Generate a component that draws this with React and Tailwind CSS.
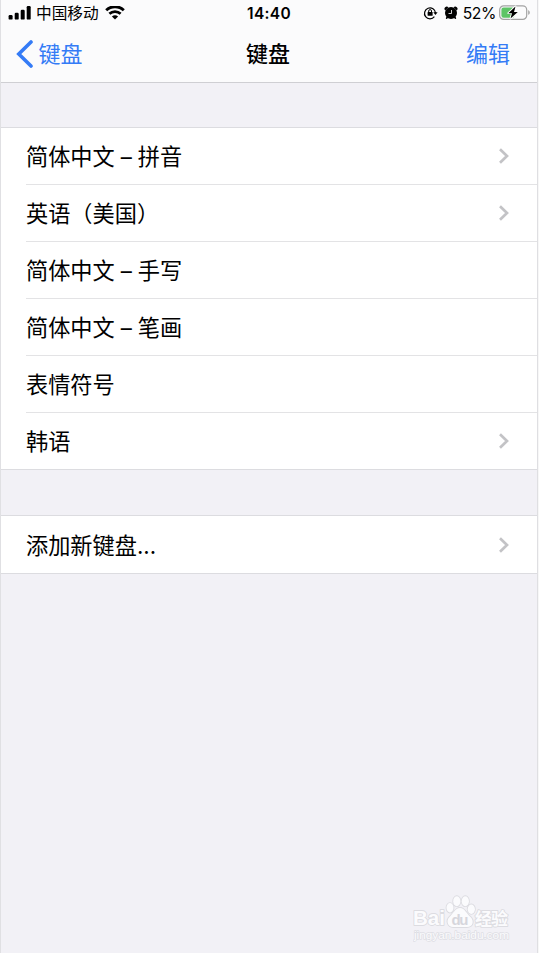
import React from 'react';

const keyboards = [
  { name: '简体中文 – 拼音', hasDetail: true },
  { name: '英语（美国）', hasDetail: true },
  { name: '简体中文 – 手写', hasDetail: false },
  { name: '简体中文 – 笔画', hasDetail: false },
  { name: '表情符号', hasDetail: false },
  { name: '韩语', hasDetail: true },
];

const SignalIcon = () => (
  <svg className="ml-[7px] h-[14px] w-[23px]" viewBox="0 0 23 14" fill="#000">
    <rect x="0.6" y="9" width="4" height="4.6" rx="1.2" />
    <rect x="6.7" y="6.8" width="4" height="6.8" rx="1.2" />
    <rect x="12.7" y="3.8" width="4" height="9.8" rx="1.2" />
    <rect x="18.7" y="0" width="4" height="13.6" rx="1.2" />
  </svg>
);

const WifiIcon = () => (
  <svg className="ml-[6px] h-[14px] w-[20px]" viewBox="0 0 20 14" fill="none" stroke="#000">
    <path d="M1.2 4.2C6 -0.4 14 -0.4 18.8 4.2" strokeWidth="2.9" />
    <path d="M4.4 7.8C7.5 4.8 12.5 4.8 15.6 7.8" strokeWidth="2.7" />
    <path d="M10 13.5L6.9 10.4C8.6 8.8 11.4 8.8 13.1 10.4Z" fill="#000" stroke="none" />
  </svg>
);

const RotationLockIcon = () => (
  <svg className="h-[14px] w-[15px]" viewBox="0 0 15 14" fill="none" stroke="#000">
    <path d="M11.4 10.7A5.5 5.5 0 1 1 12.5 7" strokeWidth="1.25" />
    <path d="M10.3 6.2H14.6L12.5 9.1Z" fill="#000" stroke="none" />
    <rect x="4.6" y="6" width="5" height="3.8" rx="0.5" fill="#000" stroke="none" />
    <path d="M5.7 6.4V5A1.4 1.4 0 0 1 8.5 5V6.4" strokeWidth="1" />
  </svg>
);

const AlarmIcon = () => (
  <svg className="ml-[6px] h-[14px] w-[14px]" viewBox="0 0 14 14">
    <circle cx="7" cy="7" r="6" />
    <path d="M1.2 4.4A2.2 2.2 0 0 1 4.4 1.2ZM12.8 4.4A2.2 2.2 0 0 0 9.6 1.2Z" />
    <path d="M3.4 11L2.6 12.2M10.6 11L11.4 12.2" stroke="#000" strokeWidth="1.6" strokeLinecap="round" />
    <path d="M7.5 4V7.5H4.5" fill="none" stroke="#fff" strokeWidth="0.8" />
  </svg>
);

const BatteryIcon = () => (
  <svg className="ml-[3px] h-[16px] w-[32px]" viewBox="0 0 32 16">
    <rect x="0.7" y="0.8" width="27" height="13.6" rx="4" fill="none" stroke="#a3a3a3" strokeWidth="1.2" />
    <rect x="2.4" y="2.5" width="13" height="10.2" rx="2.2" fill="#5dc466" />
    <path d="M29.2 5.2C31.3 5.9 31.3 9.1 29.2 9.8Z" fill="#a3a3a3" />
    <path
      d="M16.5 1.4L9.3 8.2H13L11.5 13.6L18.8 6.9H15Z"
      fill="#000"
      stroke="#fff"
      strokeWidth="1.8"
      strokeLinejoin="round"
      paintOrder="stroke"
    />
  </svg>
);

const Chevron = () => (
  <svg className="mr-[27px] h-[18px] w-[12px]" viewBox="0 0 12 18" fill="none">
    <path d="M2 2.2L9 9L2 15.8" stroke="#c3c3c6" strokeWidth="2.7" />
  </svg>
);

const StatusBar = () => (
  <div className="grid h-[25px] grid-cols-3 items-center">
    <div className="flex items-center">
      <SignalIcon />
      <span className="ml-[5px] pt-px text-[15.7px] leading-[25px]">中国移动</span>
      <WifiIcon />
    </div>
    <div className="text-center text-[15.5px] leading-[25px] font-semibold tracking-[0.3px]">14:40</div>
    <div className="flex items-center justify-end pr-[6px]">
      <RotationLockIcon />
      <AlarmIcon />
      <span className="ml-[5px] text-[15.7px] leading-[25px] tracking-[-0.4px]">52%</span>
      <BatteryIcon />
    </div>
  </div>
);

const NavBar = () => (
  <div className="grid h-[57px] grid-cols-3 items-center text-[22px] leading-[56px]">
    <div className="flex items-center text-[#347bf6]">
      <svg className="ml-[14px] h-[28px] w-[18px]" viewBox="0 0 18 28" fill="none">
        <path d="M16 2L3.8 14L16 26" stroke="currentColor" strokeWidth="3.6" strokeLinecap="round" />
      </svg>
      <span className="ml-[5.5px]">键盘</span>
    </div>
    <div className="pr-[2px] text-center font-medium">键盘</div>
    <div className="pr-[27px] text-right text-[#347bf6]">编辑</div>
  </div>
);

const Row = ({ name, hasDetail, isLast }) => (
  <div
    className={`ml-[25px] flex items-center justify-between text-[22.2px] ${
      isLast ? 'h-[56px]' : 'h-[57px] border-b border-[#e3e3e5]'
    }`}
  >
    <span className="pt-[2px] leading-[54px] [word-spacing:-0.3px]">{name}</span>
    {hasDetail && <Chevron />}
  </div>
);

const Watermark = () => (
  <div className="absolute right-[27px] bottom-[9px] w-[98px]">
    <svg className="h-[50px] w-[98px]" viewBox="0 0 98 50">
      <g fill="#fbfbfd" stroke="#dcdce1" strokeWidth="1.8" paintOrder="stroke" strokeLinejoin="round">
        <text
          x="0"
          y="31"
          fontSize="21"
          fontWeight="700"
          fontFamily="Liberation Sans, sans-serif"
          textLength="32"
          lengthAdjust="spacingAndGlyphs"
        >
          Bai
        </text>
        <ellipse cx="37" cy="13.8" rx="3.5" ry="4.7" />
        <ellipse cx="43.8" cy="7.2" rx="3.6" ry="5" />
        <ellipse cx="52.3" cy="7.2" rx="3.6" ry="5" />
        <ellipse cx="58.3" cy="15.2" rx="3.6" ry="4.7" />
        <path d="M47 14C42 14 40 20 36.5 23C32.5 27 35 33 40 33C44 33 50 33 54 33C60 33 61.5 27 57.5 23C53.5 20 52 14 47 14Z" />
        <text x="62" y="31" fontSize="17" fontWeight="700" fontFamily="Noto Sans CJK SC, sans-serif" textLength="33">
          经验
        </text>
        <text
          x="1"
          y="45"
          fontSize="11"
          strokeWidth="1.4"
          stroke="#dedee4"
          fontFamily="Liberation Sans, sans-serif"
          textLength="95"
          lengthAdjust="spacingAndGlyphs"
        >
          jingyan.baidu.com
        </text>
      </g>
      <text x="38.5" y="30.5" fontSize="15" fontWeight="700" fill="#d6d6dc" fontFamily="Liberation Sans, sans-serif" textLength="17">
        du
      </text>
    </svg>
  </div>
);

const App = () => (
  <div className="relative flex h-[953px] w-[539px] flex-col overflow-hidden border-r border-l border-r-[#f7f7f7] border-l-[#e0e0e3] bg-[#f2f1f6] font-['Inter','Noto_Sans_CJK_SC',sans-serif] text-black">
    <div className="flex grow flex-col border-r border-[#dfdfe2]">
      <header className="h-[83px] border-b border-[#cfcfd3] bg-[#fbfbfc]">
        <StatusBar />
        <NavBar />
      </header>

      <section className="mt-[44px] border-t border-b border-[#dcdce0] bg-white">
        {keyboards.map((keyboard, index) => (
          <Row key={keyboard.name} {...keyboard} isLast={index === keyboards.length - 1} />
        ))}
      </section>

      <section className="mt-[45px] border-t border-b border-[#dcdce0] bg-white pt-px">
        <Row name="添加新键盘..." hasDetail isLast />
      </section>
    </div>

    <Watermark />
  </div>
);

export default App;
